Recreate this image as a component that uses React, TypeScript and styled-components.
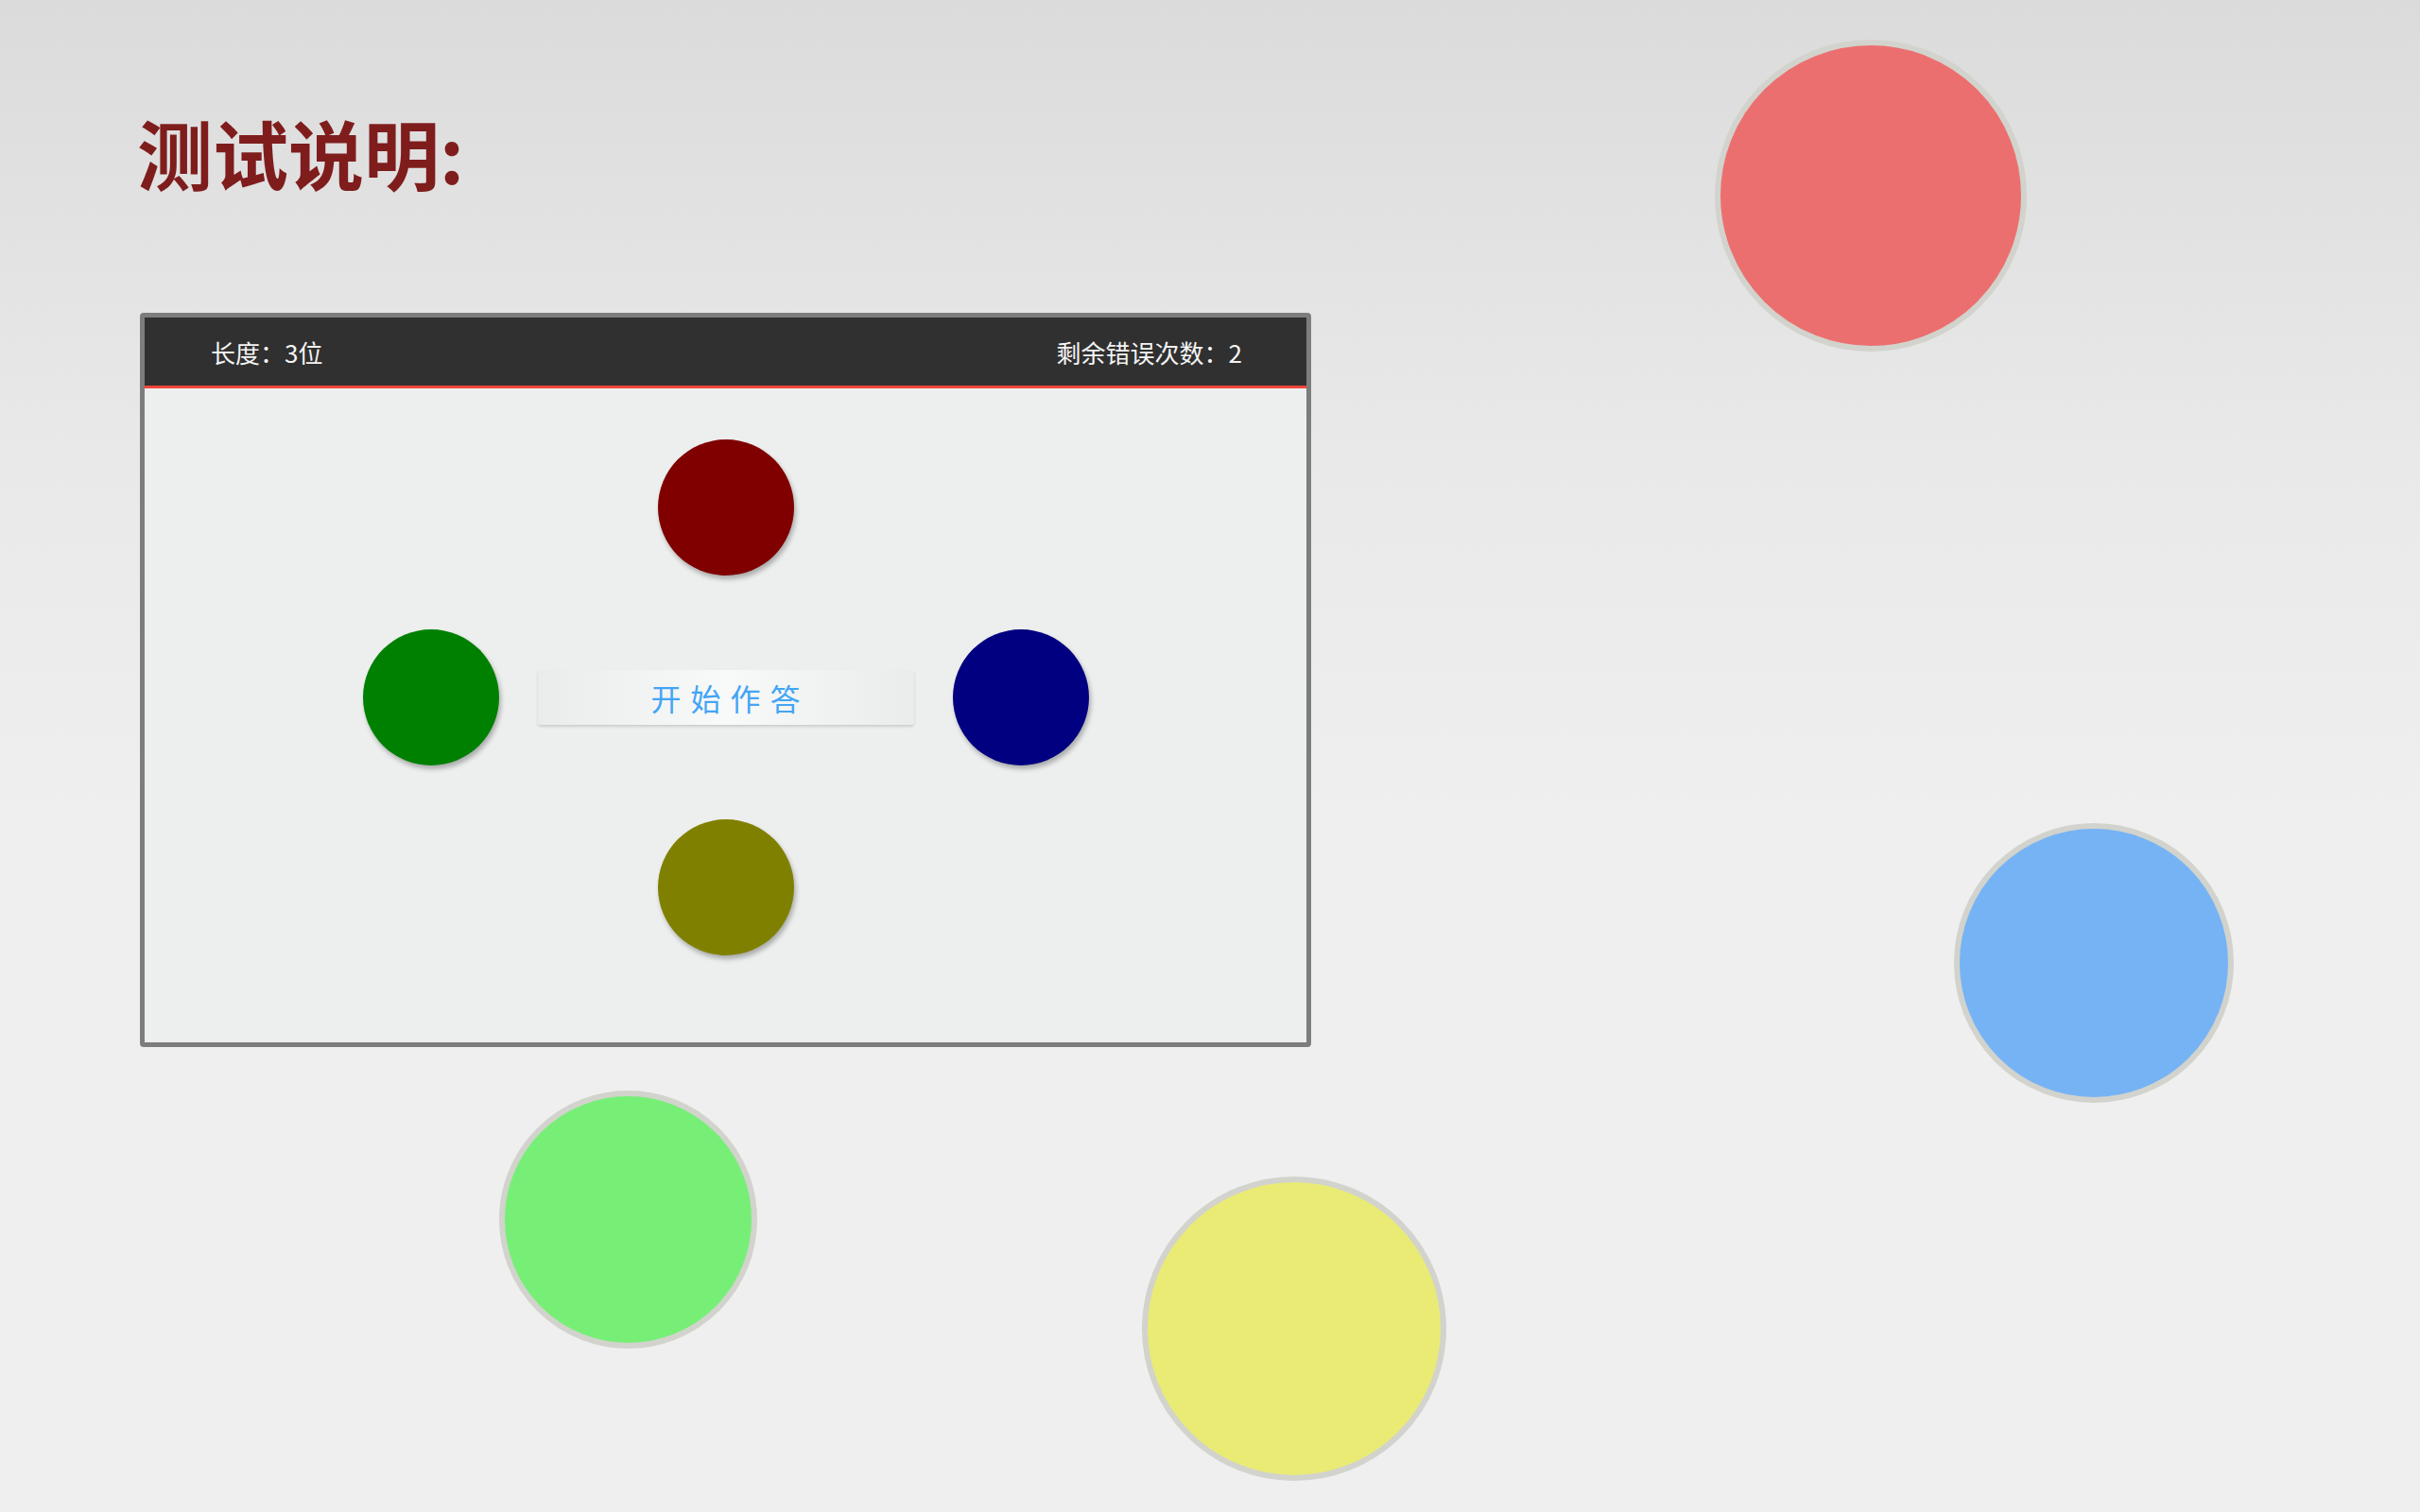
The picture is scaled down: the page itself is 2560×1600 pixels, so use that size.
import * as React from "react"
import styled, {createGlobalStyle} from "styled-components"

const GlobalStyle = createGlobalStyle`
    html, body {
        margin: 0;
        padding: 0;
    }
    body {
        font-family: "Noto Sans CJK SC", "Noto Sans", sans-serif;
        background: #efefef;
    }
`

const Page = styled.div`
    position: relative;
    width: 2560px;
    height: 1600px;
    overflow: hidden;
    box-sizing: border-box;
    padding: 110px 0 0 148px;
    background: linear-gradient(to bottom, #dbdbdb 0%, #e9e9e9 30%, #efefef 55%, #efefef 100%);
`

const Title = styled.h1`
    margin: 0 0 0 -3px;
    font-size: 80px;
    line-height: 100px;
    font-weight: 700;
    color: #7f1d1d;
`

const Panel = styled.section`
    position: relative;
    z-index: 1;
    margin-top: 121px;
    width: 1239px;
    box-sizing: border-box;
    border: 5px solid #7d7d7d;
    border-radius: 4px;
    background: #edefee;
`

const Header = styled.header`
    display: flex;
    justify-content: space-between;
    align-items: center;
    height: 72px;
    padding: 0 68px 0 70px;
    background: #303030;
    border-bottom: 3px solid #f0463a;
    color: #f4f4f4;
    font-size: 26px;
`

const Board = styled.div`
    display: grid;
    grid-template-columns: 144px 480px 144px;
    grid-template-rows: repeat(3, 144px);
    row-gap: 57px;
    justify-content: center;
    justify-items: center;
    padding: 54px 0 92px;
`

const Dot = styled.div<{$color: string, $col: number, $row: number}>`
    grid-column: ${p => p.$col};
    grid-row: ${p => p.$row};
    width: 144px;
    height: 144px;
    border-radius: 50%;
    background: ${p => p.$color};
    box-shadow: 2px 4px 5px rgba(0, 0, 0, 0.28);
`

const StartButton = styled.button`
    grid-column: 2;
    grid-row: 2;
    align-self: center;
    width: 398px;
    height: 58px;
    border: none;
    border-radius: 3px;
    background: linear-gradient(to right, #eaecec 0%, #f8f9f9 50%, #eaecec 100%);
    box-shadow: 0 2px 3px rgba(0, 0, 0, 0.14);
    color: #42a5f5;
    font-family: "Noto Sans CJK SC", "Noto Sans", sans-serif;
    font-size: 32px;
    letter-spacing: 10px;
    padding: 0 0 0 10px;
    cursor: pointer;
`

const Bubble = styled.div<{$color: string, $size: number, $x: number, $y: number}>`
    position: absolute;
    left: ${p => p.$x - p.$size / 2}px;
    top: ${p => p.$y - p.$size / 2}px;
    width: ${p => p.$size}px;
    height: ${p => p.$size}px;
    box-sizing: border-box;
    border-radius: 50%;
    border: 6px solid #d2d3cd;
    background: ${p => p.$color};
`

const bubbles = [
    {color: "#ec6f6f", size: 330, x: 1979, y: 207},
    {color: "#76b3f5", size: 296, x: 2215, y: 1019},
    {color: "#77ef77", size: 273, x: 664, y: 1290},
    {color: "#e9eb75", size: 322, x: 1369, y: 1406},
]

export default function App() {
    return (
        <Page>
            <GlobalStyle />
            {bubbles.map((b, i) => (
                <Bubble key={i} $color={b.color} $size={b.size} $x={b.x} $y={b.y} />
            ))}
            <Title>测试说明:</Title>
            <Panel>
                <Header>
                    <span>长度：3位</span>
                    <span>剩余错误次数：2</span>
                </Header>
                <Board>
                    <Dot $color="#800000" $col={2} $row={1} />
                    <Dot $color="#008000" $col={1} $row={2} />
                    <StartButton>开始作答</StartButton>
                    <Dot $color="#000080" $col={3} $row={2} />
                    <Dot $color="#808000" $col={2} $row={3} />
                </Board>
            </Panel>
        </Page>
    )
}
